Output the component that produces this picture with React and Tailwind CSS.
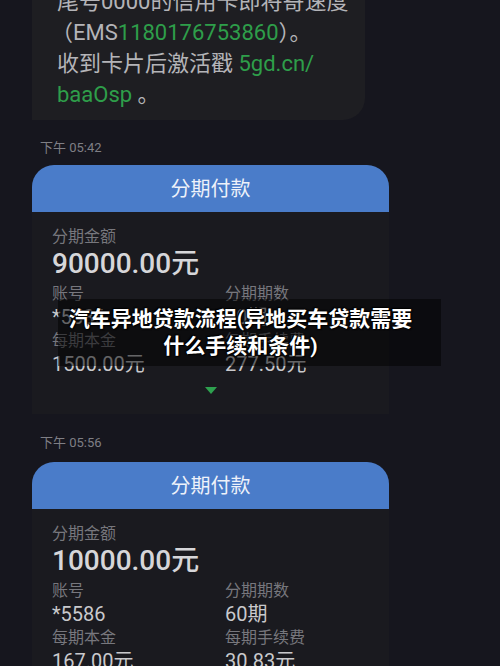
import React from "react";

const font = { fontFamily: 'Roboto, "Noto Sans CJK SC", sans-serif' };

function Field({ label, value }) {
  return (
    <div className="flex flex-col">
      <div className="text-[16px] leading-[22px] text-[#77777d]">{label}</div>
      <div className="text-[20px] leading-[24px] text-[#c9c9cc]">{value}</div>
    </div>
  );
}

function Card({ amount, account, periods, principal, fee, arrow }) {
  return (
    <div className="w-[357px] rounded-t-[22px] overflow-hidden bg-[#1a1a1f]">
      <div className="h-[47px] bg-[#4a7cc9] flex items-center justify-center text-[20px] text-[#eef2fa]">
        分期付款
      </div>
      <div className="pl-[20px] pt-[14px] pb-[19px]">
        <div className="text-[16px] leading-[22px] text-[#77777d]">分期金额</div>
        <div className="text-[28px] leading-[32px] font-medium text-[#d6d6d9]">{amount}</div>
        <div className="grid grid-cols-[173px_1fr] gap-y-[1px] mt-[3px]">
          <Field label="账号" value={account} />
          <Field label="分期期数" value={periods} />
          <Field label="每期本金" value={principal} />
          <Field label="每期手续费" value={fee} />
        </div>
        {arrow && (
          <div className="flex justify-center pr-[20px] mt-[11px]">
            <svg width="12" height="8" viewBox="0 0 12 8">
              <path d="M0 0 L12 0 L6 7 Z" fill="#2ea14f" />
            </svg>
          </div>
        )}
      </div>
    </div>
  );
}

export default function App() {
  return (
    <div className="relative w-[500px] h-[666px] overflow-hidden bg-[#16161e]" style={font}>
      <div className="flex flex-col pl-[32px]">
        <div className="mt-[-14px] w-[333px] overflow-hidden bg-[#1e1e22] rounded-br-[22px] pl-[25px] pr-[10px] pb-[10px] text-[22px] leading-[31px] text-[#b4b4b8]">
          <div className="whitespace-nowrap">尾号0000的信用卡即将寄速度</div>
          <div className="ml-[-6px] whitespace-nowrap">
            （EMS<span className="text-[#2e9e4a]">1180176753860</span>）。
          </div>
          <div className="whitespace-nowrap">
            收到卡片后激活戳 <span className="text-[#2e9e4a]">5gd.cn/</span>
          </div>
          <div>
            <span className="text-[#2e9e4a]">baaOsp</span> 。
          </div>
        </div>

        <div className="mt-[19px] pl-[8px] text-[13px] leading-[18px] text-[#7f7f85]">下午 05:42</div>
        <div className="mt-[8px]">
          <Card amount="90000.00元" account="*5586" periods="60期" principal="1500.00元" fee="277.50元" arrow />
        </div>

        <div className="mt-[20px] pl-[8px] text-[13px] leading-[18px] text-[#7f7f85]">下午 05:56</div>
        <div className="mt-[10px]">
          <Card amount="10000.00元" account="*5586" periods="60期" principal="167.00元" fee="30.83元" />
        </div>
      </div>

      <div className="absolute left-[58px] top-[299px] w-[383px] h-[67px] bg-black/50 flex flex-col items-center justify-center">
        <div
          className="text-[21px] leading-[27px] font-bold text-white text-center pr-[18px]"
          style={{ textShadow: "0 0 2px #000, 1px 1px 1px #000, -1px -1px 1px #000" }}
        >
          <div>汽车异地贷款流程(异地买车贷款需要</div>
          <div>什么手续和条件)</div>
        </div>
      </div>
    </div>
  );
}
